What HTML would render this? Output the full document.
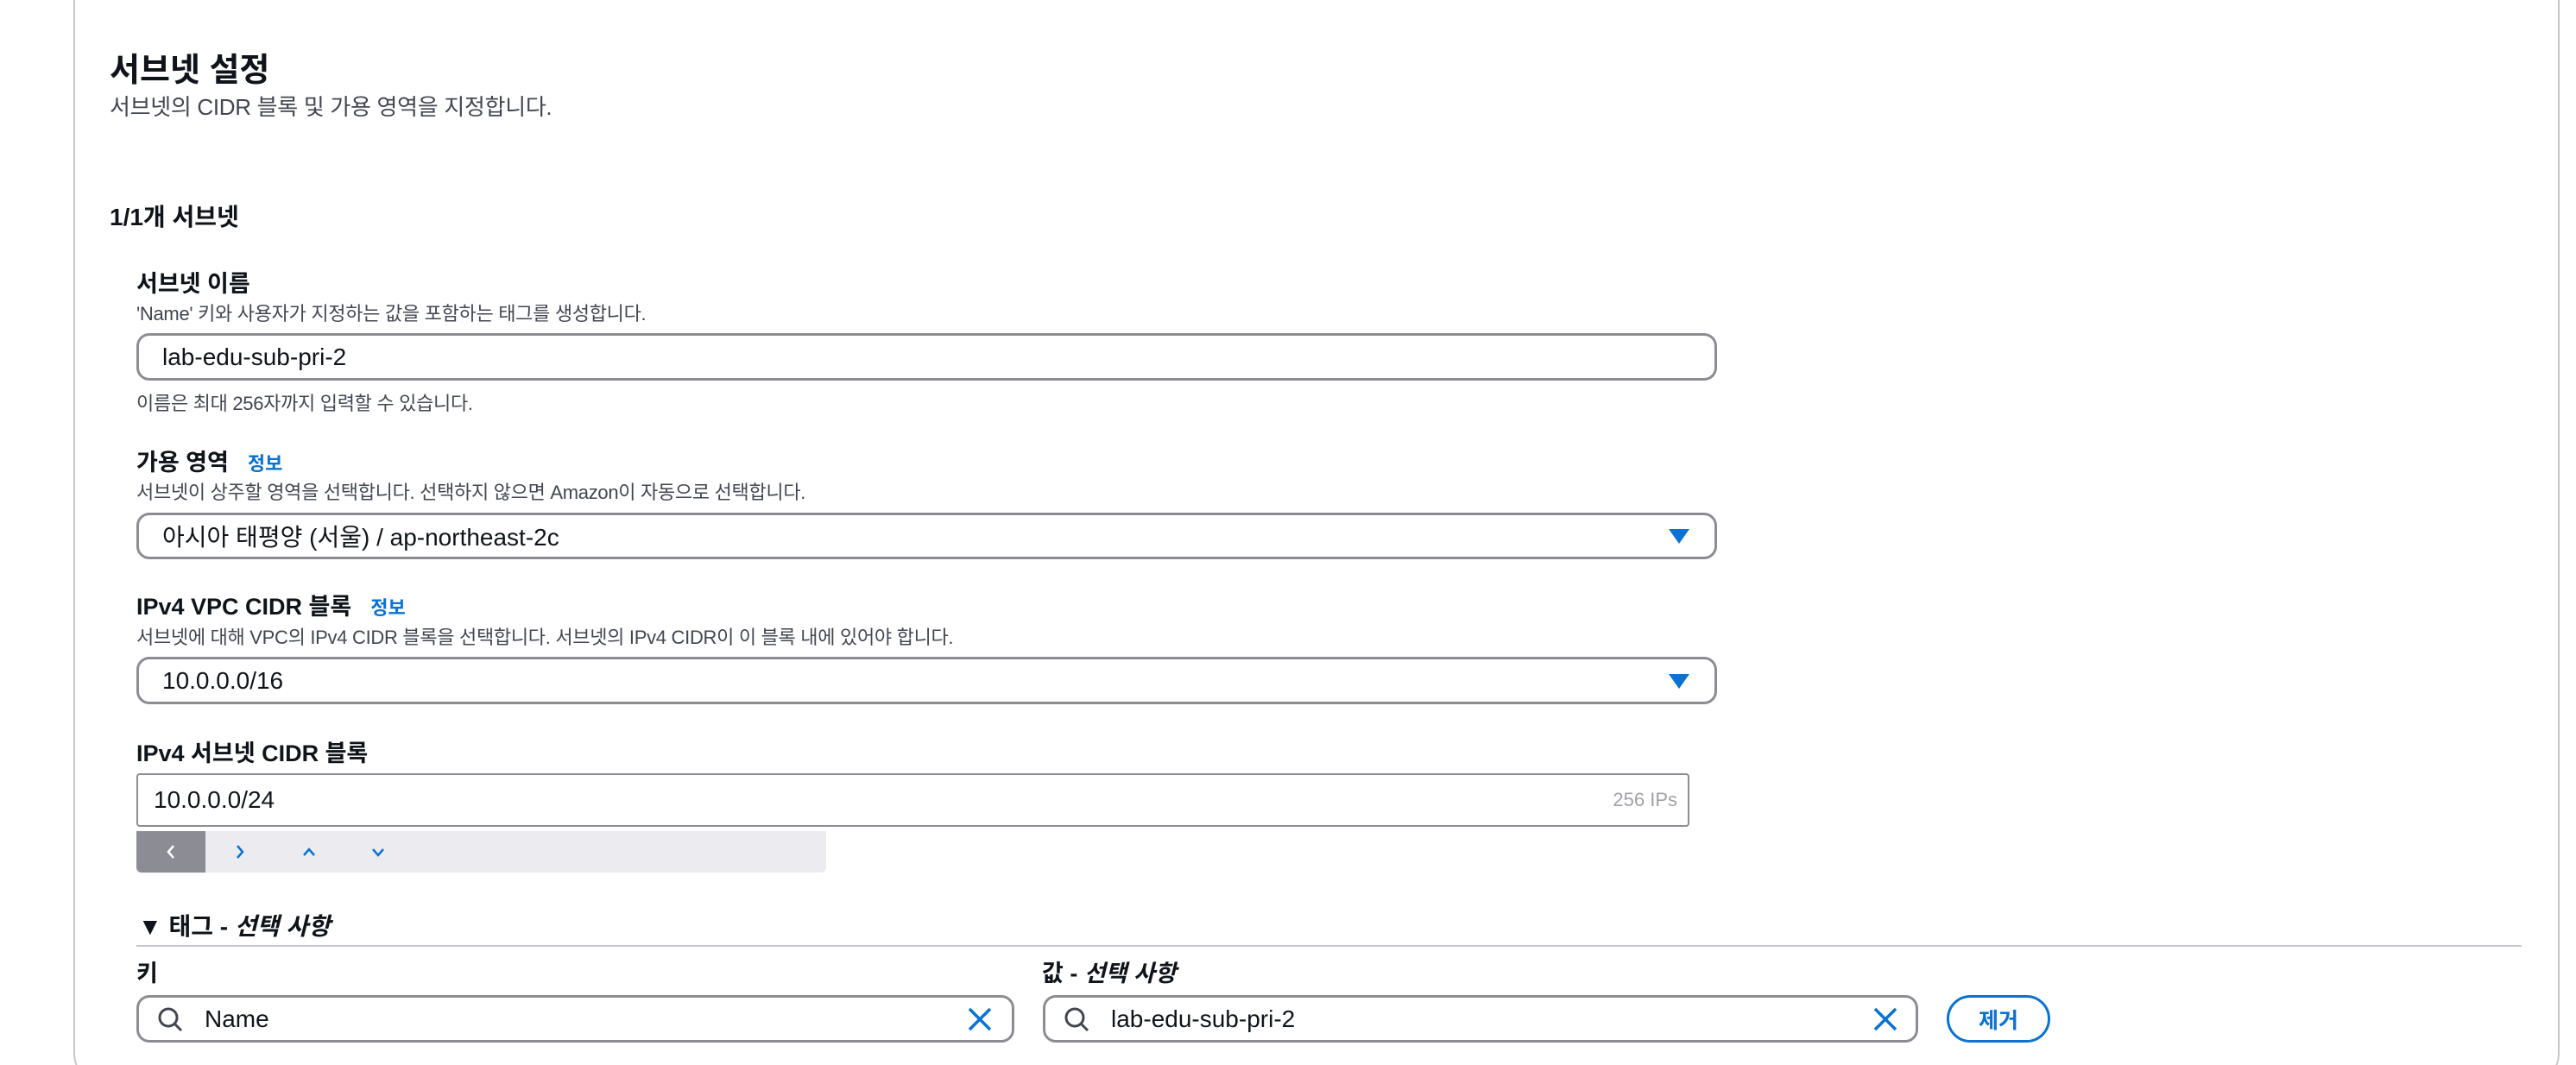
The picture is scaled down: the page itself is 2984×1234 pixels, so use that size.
<!DOCTYPE html>
<html style="overflow:hidden;height:1234px"><head><meta charset="utf-8"><style>
*{box-sizing:border-box;margin:0;padding:0}
body{width:2984px;height:1234px;background:#fff;overflow:hidden;position:relative;font-family:"Liberation Sans","Noto Sans CJK KR",sans-serif;color:#0f141a}
.wrap{position:absolute;left:0;top:0;width:2984px;height:1234px;overflow:hidden}
.card{position:absolute;left:85px;top:-40px;width:2880px;height:1300px;border:2px solid #c6c6cd;border-radius:40px}
.a{position:absolute;white-space:nowrap}
.b{font-weight:700}
.d{font-size:22px;color:#424650;letter-spacing:-0.3px}
.lbl{font-size:27px;font-weight:700}
.info{font-size:22px;color:#0972d3;font-weight:700;margin-left:22px}
.inp{position:absolute;border:3px solid #8c8c94;border-radius:15px;background:#fff;font-size:28px;display:flex;align-items:center}
.tri{position:absolute;width:0;height:0;border-left:12px solid transparent;border-right:12px solid transparent;border-top:17px solid #0972d3}
</style></head><body><div class="wrap">
<div class="card"></div>
<div class="a b" style="left:127px;top:50px;font-size:38px">서브넷 설정</div>
<div class="a" style="left:127px;top:104px;font-size:26px;color:#424650;letter-spacing:-0.3px">서브넷의 CIDR 블록 및 가용 영역을 지정합니다.</div>
<div class="a b" style="left:127px;top:230px;font-size:28px">1/1개 서브넷</div>

<div class="a lbl" style="left:158px;top:307px">서브넷 이름</div>
<div class="a d" style="left:158px;top:346px">'Name' 키와 사용자가 지정하는 값을 포함하는 태그를 생성합니다.</div>
<div class="inp" style="left:158px;top:386px;width:1831px;height:55px;padding-left:27px">lab-edu-sub-pri-2</div>
<div class="a d" style="left:158px;top:450px">이름은 최대 256자까지 입력할 수 있습니다.</div>

<div class="a lbl" style="left:158px;top:514px">가용 영역<span class="info">정보</span></div>
<div class="a d" style="left:158px;top:553px">서브넷이 상주할 영역을 선택합니다. 선택하지 않으면 Amazon이 자동으로 선택합니다.</div>
<div class="inp" style="left:158px;top:594px;width:1831px;height:54px;padding-left:27px">아시아 태평양 (서울) / ap-northeast-2c</div>
<div class="tri" style="left:1933px;top:613px"></div>

<div class="a lbl" style="left:158px;top:681px">IPv4 VPC CIDR 블록<span class="info">정보</span></div>
<div class="a d" style="left:158px;top:721px">서브넷에 대해 VPC의 IPv4 CIDR 블록을 선택합니다. 서브넷의 IPv4 CIDR이 이 블록 내에 있어야 합니다.</div>
<div class="inp" style="left:158px;top:761px;width:1831px;height:55px;padding-left:27px">10.0.0.0/16</div>
<div class="tri" style="left:1933px;top:781px"></div>

<div class="a lbl" style="left:158px;top:851px">IPv4 서브넷 CIDR 블록</div>
<div class="inp" style="left:158px;top:896px;width:1799px;height:62px;border-radius:4px;border-width:2px;padding-left:18px">10.0.0.0/24<span style="position:absolute;right:12px;font-size:22px;color:#a0a0a8">256 IPs</span></div>
<div class="a" style="left:158px;top:963px;width:799px;height:48px;background:#ebebf0;border-radius:0 0 6px 6px"></div>
<div class="a" style="left:158px;top:963px;width:80px;height:48px;background:#8c8c94;border-radius:0 0 0 6px"></div>
<svg class="a" style="left:158px;top:963px" width="320" height="48" fill="none" stroke-width="2.5">
<path d="M43 17 L37 24 L43 31" stroke="#fff"/>
<path d="M117 17 L123 24 L117 31" stroke="#0972d3"/>
<path d="M194 28 L200 21 L206 28" stroke="#0972d3"/>
<path d="M274 21 L280 28 L286 21" stroke="#0972d3"/>
</svg>

<div class="a b" style="left:160px;top:1052px;font-size:28px">▼ 태그 - <i>선택 사항</i></div>
<div class="a" style="left:158px;top:1095px;width:2763px;height:2px;background:#c6c6cd"></div>
<div class="a lbl" style="left:158px;top:1106px">키</div>
<div class="a lbl" style="left:1207px;top:1106px">값 - <i>선택 사항</i></div>

<div class="inp" style="left:158px;top:1153px;width:1017px;height:55px;padding-left:76px">Name</div>
<div class="inp" style="left:1208px;top:1153px;width:1014px;height:55px;padding-left:76px">lab-edu-sub-pri-2</div>
<svg class="a" style="left:180px;top:1164px" width="40" height="36" fill="none" stroke="#424650" stroke-width="3"><circle cx="15" cy="15" r="10"/><path d="M22 22 L30 30"/></svg>
<svg class="a" style="left:1230px;top:1164px" width="40" height="36" fill="none" stroke="#424650" stroke-width="3"><circle cx="15" cy="15" r="10"/><path d="M22 22 L30 30"/></svg>
<svg class="a" style="left:1120px;top:1166px" width="30" height="30" stroke="#0972d3" stroke-width="3.5"><path d="M3 3 L27 27 M27 3 L3 27"/></svg>
<svg class="a" style="left:2169px;top:1166px" width="30" height="30" stroke="#0972d3" stroke-width="3.5"><path d="M3 3 L27 27 M27 3 L3 27"/></svg>
<div class="a" style="left:2255px;top:1153px;width:120px;height:55px;border:3px solid #0972d3;border-radius:28px;color:#0972d3;font-size:25px;font-weight:700;display:flex;align-items:center;justify-content:center">제거</div>
</div></body></html>
